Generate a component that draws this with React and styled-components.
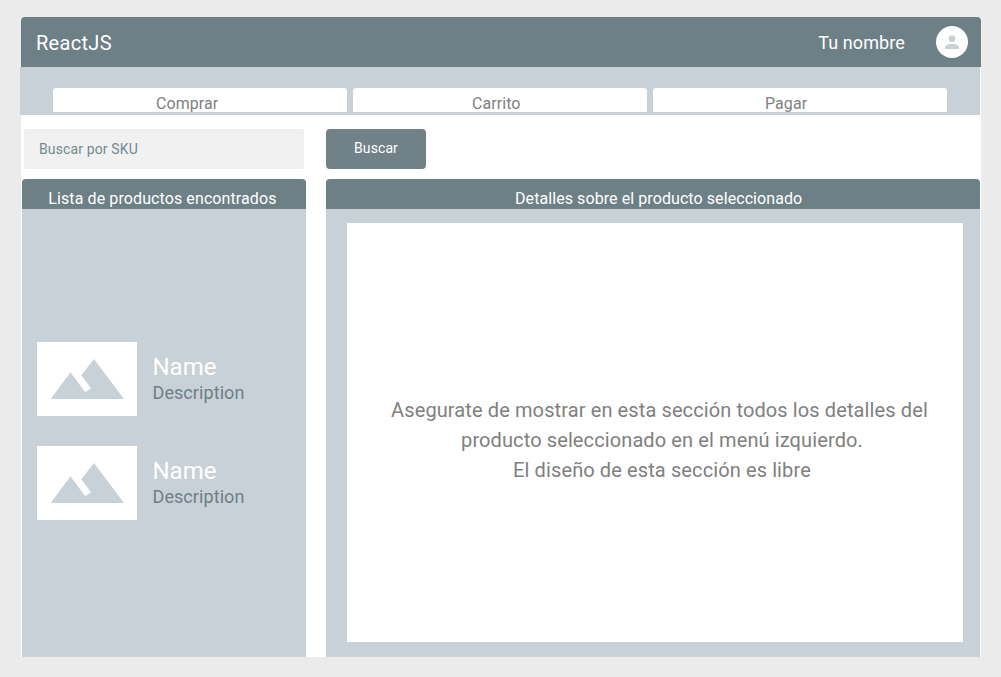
import React from "react";
import styled, { createGlobalStyle } from "styled-components";

const slate = "#6d8086";
const mist = "#c9d1d8";

const GlobalStyle = createGlobalStyle`
  * { box-sizing: border-box; }
  body {
    margin: 0;
    background: #ebebeb;
    font-family: Roboto, "Liberation Sans", sans-serif;
    overflow: hidden;
  }
`;

const Page = styled.div`
  height: 677px;
  padding: 17px 20px 20px 21px;
`;

const Window = styled.main`
  display: flex;
  flex-direction: column;
  width: 960px;
  height: 640px;
  background: #fff;
  border-radius: 4px 4px 0 0;
`;

const Label = styled.span`
  white-space: nowrap;
  font-size: ${(p) => p.$size}px;
  letter-spacing: ${(p) => p.$spacing || 0}px;
  line-height: ${(p) => p.$line || 20}px;
  color: ${(p) => p.$color || "#fff"};
`;

const Header = styled.header`
  display: flex;
  align-items: center;
  justify-content: space-between;
  flex: none;
  height: 50px;
  padding: 2px 13px 0 15px;
  background: ${slate};
  border-radius: 4px 4px 0 0;
`;

const Account = styled.div`
  display: flex;
  align-items: center;
  gap: 31px;
`;

const Avatar = styled.svg`
  width: 32px;
  height: 32px;
  margin-bottom: 2px;
`;

const TabBar = styled.nav`
  display: flex;
  flex: none;
  gap: 6px;
  width: 960px;
  height: 48px;
  margin-left: -1px;
  padding: 21px 33px 3px;
  background: ${mist};
`;

const Tab = styled.div`
  flex: none;
  width: 294px;
  height: 24px;
  padding: 6px 0 0 ${(p) => p.$indent}px;
  background: #fff;
  border-radius: 3px 3px 0 0;
  line-height: 20px;
`;

const SearchRow = styled.div`
  display: flex;
  flex: none;
  gap: 22px;
  padding: 14px 0 10px 3px;
`;

const SearchField = styled.div`
  display: flex;
  align-items: center;
  width: 280px;
  height: 40px;
  padding-left: 15px;
  background: #f1f1f1;
  border-radius: 1px;
`;

const SearchButton = styled.button`
  display: flex;
  align-items: center;
  justify-content: center;
  width: 100px;
  height: 40px;
  padding: 0 0 2px;
  border: 0;
  border-radius: 4px;
  background: #718188;
  font-family: inherit;
`;

const Columns = styled.div`
  display: flex;
  flex: 1;
  gap: 19.7px;
  padding: 0 1px 0 1.3px;
`;

const Panel = styled.section`
  display: flex;
  flex-direction: column;
  width: ${(p) => p.$width}px;
  background: ${mist};
  border-radius: 4px 4px 0 0;
`;

const PanelTitle = styled.div`
  flex: none;
  height: 30px;
  padding: 10px 0 0 ${(p) => p.$indent}px;
  background: ${slate};
  border-radius: 4px 4px 0 0;
  line-height: 20px;
`;

const ProductList = styled.div`
  display: flex;
  flex-direction: column;
  gap: 30px;
  padding: 133px 0 0 15px;
`;

const Product = styled.div`
  display: flex;
  gap: 15.5px;
  height: 74px;
`;

const Thumbnail = styled.div`
  width: 99.7px;
  height: 74px;
  background: #fff;
`;

const Mountains = styled.svg`
  display: block;
  width: 100%;
  height: 100%;
`;

const ProductText = styled.div`
  display: flex;
  flex-direction: column;
  padding-top: 10px;
`;

const Details = styled.div`
  display: flex;
  flex-direction: column;
  justify-content: center;
  align-items: center;
  height: 419px;
  margin: 14px 17px 0 21px;
  padding: 15px 0 0 9px;
  background: #fff;
`;

const DetailsLine = styled(Label)`
  padding-left: ${(p) => p.$indent}px;
`;

const products = [
  { name: "Name", description: "Description" },
  { name: "Name", description: "Description" },
];

const tabs = [
  { label: "Comprar", indent: 103 },
  { label: "Carrito", indent: 119 },
  { label: "Pagar", indent: 112 },
];

const details = [
  { text: "Asegurate de mostrar en esta sección todos los detalles del", indent: 0 },
  { text: "producto seleccionado en el menú izquierdo.", indent: 5 },
  { text: "El diseño de esta sección es libre", indent: 5 },
];

export default function App() {
  return (
    <Page>
      <GlobalStyle />
      <Window>
        <Header>
          <Label $size={20} $spacing={0.3}>ReactJS</Label>
          <Account>
            <Label $size={18} $spacing={0.1}>Tu nombre</Label>
            <Avatar viewBox="0 0 32 32">
              <circle cx="16" cy="16" r="16" fill="#fff" />
              <circle cx="16" cy="12.7" r="3.4" fill={mist} />
              <path d="M9 23v-1.7c0-2.4 4.3-3.6 7-3.6s7 1.2 7 3.6V23z" fill={mist} />
            </Avatar>
          </Account>
        </Header>
        <TabBar>
          {tabs.map((tab) => (
            <Tab key={tab.label} $indent={tab.indent}>
              <Label $size={16} $spacing={0.06} $color="#808080">{tab.label}</Label>
            </Tab>
          ))}
        </TabBar>
        <SearchRow>
          <SearchField>
            <Label $size={14} $spacing={0.13} $color="#718a8f">Buscar por SKU</Label>
          </SearchField>
          <SearchButton>
            <Label $size={14} $spacing={0.1}>Buscar</Label>
          </SearchButton>
        </SearchRow>
        <Columns>
          <Panel $width={284}>
            <PanelTitle $indent={26}>
              <Label $size={16} $spacing={0.1}>Lista de productos encontrados</Label>
            </PanelTitle>
            <ProductList>
              {products.map((product, index) => (
                <Product key={index}>
                  <Thumbnail>
                    <Mountains viewBox="0 0 99.7 74">
                      <path
                        d="M13.6 57 33.6 30.3 48.3 50.3 54 46.3 44.3 33.3 57 17 87 57z"
                        fill={mist}
                      />
                    </Mountains>
                  </Thumbnail>
                  <ProductText>
                    <Label $size={24} $line={30}>{product.name}</Label>
                    <Label $size={18} $spacing={0.08} $line={22} $color={slate}>{product.description}</Label>
                  </ProductText>
                </Product>
              ))}
            </ProductList>
          </Panel>
          <Panel $width={654}>
            <PanelTitle $indent={189}>
              <Label $size={16} $spacing={0.08}>Detalles sobre el producto seleccionado</Label>
            </PanelTitle>
            <Details>
              {details.map((line) => (
                <DetailsLine key={line.text} $size={20} $spacing={0.11} $line={30} $color="#808080" $indent={line.indent}>
                  {line.text}
                </DetailsLine>
              ))}
            </Details>
          </Panel>
        </Columns>
      </Window>
    </Page>
  );
}
